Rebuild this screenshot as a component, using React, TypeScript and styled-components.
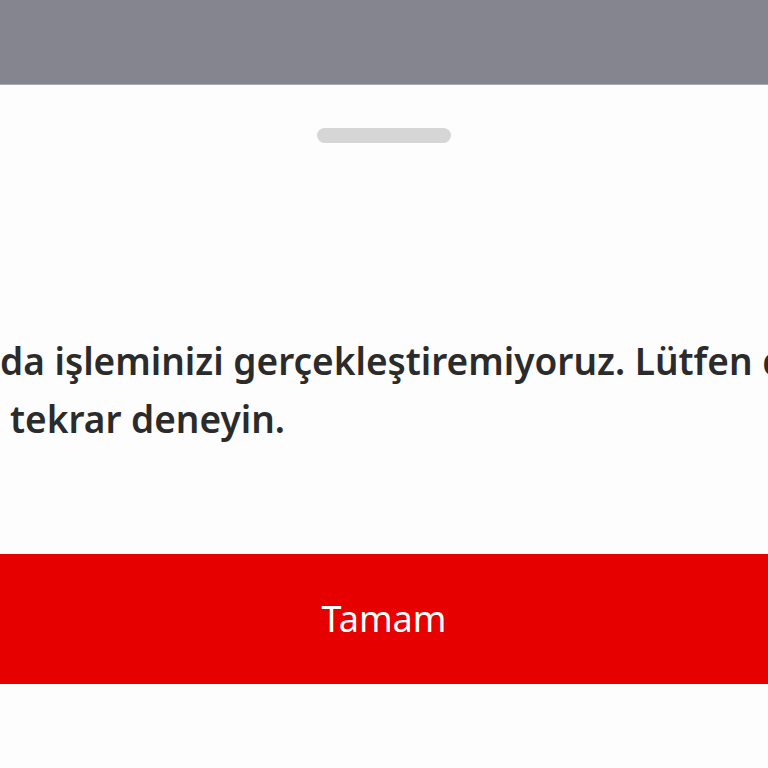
import { createGlobalStyle, styled } from "styled-components";

const GlobalStyle = createGlobalStyle`
  html, body {
    margin: 0;
    padding: 0;
    background: #fdfdfd;
    overflow: hidden;
  }
  #root {
    width: 768px;
    height: 768px;
  }
`;

const Screen = styled.div`
  display: flex;
  flex-direction: column;
  width: 768px;
  height: 768px;
  overflow: hidden;
  background: #fdfdfd;
  font-family: "Noto Sans", "Open Sans", sans-serif;
`;

const Backdrop = styled.div`
  height: 84px;
  flex-shrink: 0;
  background: #85858f;
  border-bottom: 1px solid #a9a9b0;
`;

const Sheet = styled.div`
  flex: 1;
  display: flex;
  flex-direction: column;
  align-items: center;
  background: #fdfdfd;
`;

const Handle = styled.div`
  width: 134px;
  height: 15px;
  margin-top: 43px;
  border-radius: 8px;
  background: #d6d6d6;
`;

const Message = styled.div`
  align-self: stretch;
  margin-top: 189px;
  color: #2b2b2b;
  font-size: 37px;
  font-weight: 600;
  line-height: 58px;
`;

const Line = styled.div<{ $indent: number }>`
  white-space: nowrap;
  overflow: hidden;
  padding-left: ${(p) => p.$indent}px;
`;

const OkButton = styled.button`
  align-self: stretch;
  height: 130px;
  margin-top: 106px;
  border: none;
  border-bottom: 1px solid #9b2020;
  background: #e60000;
  color: #ffffff;
  font-family: "Noto Sans", "Open Sans", sans-serif;
  font-size: 36px;
  font-weight: 400;
  cursor: pointer;
`;

export default function App() {
  return (
    <>
      <GlobalStyle />
      <Screen>
        <Backdrop />
        <Sheet>
          <Handle />
          <Message>
            <Line $indent={0}>da işleminizi gerçekleştiremiyoruz. Lütfen daha sonra</Line>
            <Line $indent={10}>tekrar deneyin.</Line>
          </Message>
          <OkButton>Tamam</OkButton>
        </Sheet>
      </Screen>
    </>
  );
}
